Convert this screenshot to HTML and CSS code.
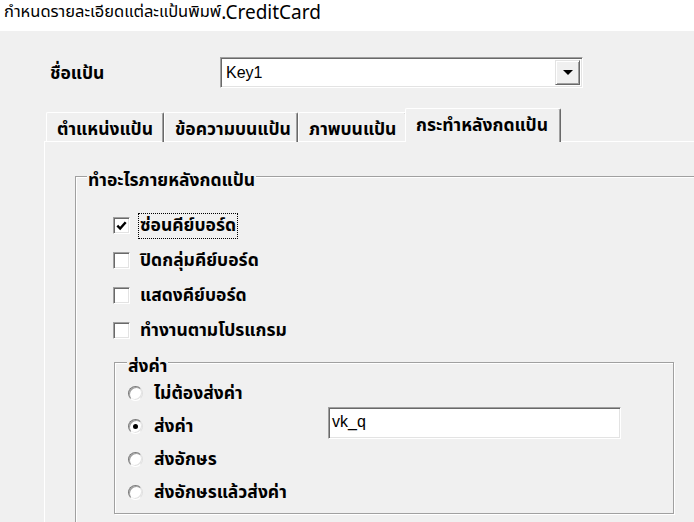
FILE: index.html
```html
<!DOCTYPE html>
<html lang="th">
<head>
<meta charset="utf-8">
<link rel="stylesheet" href="styles.css">
</head>
<body>
<div class="titlebar"><span class="title-thai">กำหนดรายละเอียดแต่ละแป้นพิมพ์</span><span class="title-latin">.CreditCard</span></div>
<div class="content">
  <div class="keyrow">
    <div class="keylabel">ชื่อแป้น</div>
    <div class="combo">
      <div class="combo-text">Key1</div>
      <div class="combo-btn"><span class="arrow"></span></div>
    </div>
  </div>
  <div class="tabs">
    <div class="tab t1">ตำแหน่งแป้น</div>
    <div class="tab t2">ข้อความบนแป้น</div>
    <div class="tab t3">ภาพบนแป้น</div>
    <div class="tab t4 active">กระทำหลังกดแป้น</div>
  </div>
  <div class="panel">
    <div class="group">
      <div class="legend">ทำอะไรภายหลังกดแป้น</div>
      <div class="checks">
        <div class="check-row"><span class="cb checked"><svg viewBox="0 0 10 10" width="11" height="11"><path d="M1.2 5.2 L3.8 7.8 L8.8 2" fill="none" stroke="#000" stroke-width="2.2"/></svg></span><span class="cb-label focus">ซ่อนคีย์บอร์ด</span></div>
        <div class="check-row"><span class="cb"></span><span class="cb-label">ปิดกลุ่มคีย์บอร์ด</span></div>
        <div class="check-row"><span class="cb"></span><span class="cb-label">แสดงคีย์บอร์ด</span></div>
        <div class="check-row"><span class="cb"></span><span class="cb-label">ทำงานตามโปรแกรม</span></div>
      </div>
      <div class="subgroup">
        <div class="legend sub">ส่งค่า</div>
        <div class="radios">
          <div class="radio-row"><span class="rb"></span><span class="rb-label">ไม่ต้องส่งค่า</span></div>
          <div class="radio-row"><span class="rb on"></span><span class="rb-label">ส่งค่า</span><div class="textbox">vk_q</div></div>
          <div class="radio-row"><span class="rb"></span><span class="rb-label">ส่งอักษร</span></div>
          <div class="radio-row"><span class="rb"></span><span class="rb-label">ส่งอักษรแล้วส่งค่า</span></div>
        </div>
      </div>
    </div>
  </div>
</div>
</body>
</html>
```

FILE: styles.css
```css
* { box-sizing: border-box; }
html, body { margin: 0; padding: 0; }
body {
  width: 694px;
  height: 522px;
  overflow: hidden;
  background: #f0f0f0;
  font-family: "Noto Sans Thai", "Noto Sans Thai UI", Loma, Garuda, sans-serif;
  font-size: 17.5px;
  font-weight: bold;
  color: #000;
}
.titlebar {
  height: 31px;
  background: #fff;
  padding-left: 4px;
  display: flex;
  align-items: center;
  padding-bottom: 8px;
  font-weight: normal;
  white-space: nowrap;
}
.title-thai {
  font-size: 16.5px;
  line-height: 26px;
}
.title-latin {
  font-family: "Noto Sans", "Open Sans", sans-serif;
  font-size: 19px;
  line-height: 26px;
}
.keyrow {
  display: flex;
  align-items: center;
  margin-top: 26px;
  padding-left: 50px;
  height: 31px;
}
.keylabel { width: 170px; line-height: 24px; padding-top: 2px; }
.combo {
  width: 363px;
  height: 31px;
  display: flex;
  background: #fff;
  border-top: 1px solid #a0a0a0;
  border-left: 1px solid #a0a0a0;
  border-right: 1px solid #fff;
  border-bottom: 1px solid #fff;
  box-shadow: inset 1px 1px 0 #696969, inset -1px -1px 0 #e3e3e3;
  padding: 2px;
}
.combo-text {
  flex: 1;
  padding-left: 3px;
  line-height: 25px;
  font-family: "Liberation Sans", Arial, sans-serif;
  font-size: 16px;
  font-weight: normal;
}
.combo-btn {
  width: 25px;
  height: 25px;
  background: #f0f0f0;
  border-top: 1px solid #e3e3e3;
  border-left: 1px solid #e3e3e3;
  border-right: 1px solid #696969;
  border-bottom: 1px solid #696969;
  box-shadow: inset 1px 1px 0 #fff, inset -1px -1px 0 #a0a0a0;
  display: flex;
  align-items: center;
  justify-content: center;
}
.arrow {
  width: 0; height: 0;
  border-left: 5px solid transparent;
  border-right: 5px solid transparent;
  border-top: 5px solid #000;
}
.tabs {
  display: flex;
  align-items: flex-end;
  margin-top: 21px;
  padding-left: 46px;
  height: 33px;
  position: relative;
  z-index: 1;
  margin-bottom: -1px;
}
.tab {
  height: 30px;
  line-height: 24px;
  padding-top: 5px;
  padding-left: 10px;
  border-top: 1px solid #fff;
  border-left: 1px solid #fff;
  border-right: 1px solid #696969;
  box-shadow: inset -1px 0 0 #a0a0a0;
  border-radius: 2px 2px 0 0;
  white-space: nowrap;
}
.t1 { width: 118px; }
.t2 { width: 134px; }
.t3 { width: 109px; }
.t4 { width: 156px; margin-left: -2px; }
.tab.active {
  height: 34px;
  padding-top: 5px;
  background: #f0f0f0;
}
.panel {
  border-top: 1px solid #fff;
  border-left: 1px solid #fff;
  margin-left: 44px;
  padding-left: 30px;
  padding-top: 34px;
  height: 381px;
  overflow: hidden;
}
.group {
  border: 1px solid #a0a0a0;
  border-right: 0;
  box-shadow: inset 1px 1px 0 #fff;
  height: 400px;
  width: 620px;
}
.legend {
  width: fit-content;
  margin-top: -8px;
  margin-left: 11px;
  padding: 0 1px;
  line-height: 24px;
  background: #f0f0f0;
}
.checks {
  padding-top: 15px;
  padding-left: 37px;
}
.check-row {
  height: 35px;
  display: flex;
  align-items: center;
}
.cb {
  width: 17px;
  height: 17px;
  background: #fff;
  border-top: 1px solid #a0a0a0;
  border-left: 1px solid #a0a0a0;
  border-right: 1px solid #fff;
  border-bottom: 1px solid #fff;
  box-shadow: inset 1px 1px 0 #696969, inset -1px -1px 0 #e3e3e3;
  display: flex;
  align-items: center;
  justify-content: center;
  flex: none;
}
.cb-label {
  margin-left: 9px;
  line-height: 24px;
  padding: 0 1px;
}
.cb-label.focus { outline: 1px dotted #000; }
.subgroup {
  margin-top: 14px;
  margin-left: 38px;
  width: 560px;
  height: 152px;
  border: 1px solid #a0a0a0;
  box-shadow: inset 1px 1px 0 #fff, 1px 1px 0 #fff;
}
.legend.sub {
  margin-top: -8px;
  margin-left: 12px;
}
.radios { padding-left: 13px; margin-top: -2px; }
.radio-row {
  height: 33px;
  display: flex;
  align-items: center;
}
.rb {
  width: 15px;
  height: 15px;
  border-radius: 50%;
  background: #fff;
  border: 1px solid;
  border-color: #7a7a7a #e0e0e0 #fff #7a7a7a;
  box-shadow: inset 1px 1px 0 #a0a0a0, inset -1px -1px 0 #e3e3e3;
  flex: none;
  display: flex;
  align-items: center;
  justify-content: center;
}
.rb.on::after {
  content: "";
  width: 5px;
  height: 5px;
  border-radius: 50%;
  background: #000;
}
.rb-label {
  margin-left: 11px;
  width: 174px;
  line-height: 24px;
  white-space: nowrap;
}
.textbox {
  width: 293px;
  height: 32px;
  margin-bottom: 8px;
  background: #fff;
  border-top: 1px solid #a0a0a0;
  border-left: 1px solid #a0a0a0;
  border-right: 1px solid #fff;
  border-bottom: 1px solid #fff;
  box-shadow: inset 1px 1px 0 #696969, inset -1px -1px 0 #e3e3e3;
  padding-left: 3px;
  line-height: 28px;
  font-family: "Liberation Sans", Arial, sans-serif;
  font-size: 16px;
  font-weight: normal;
}
```
